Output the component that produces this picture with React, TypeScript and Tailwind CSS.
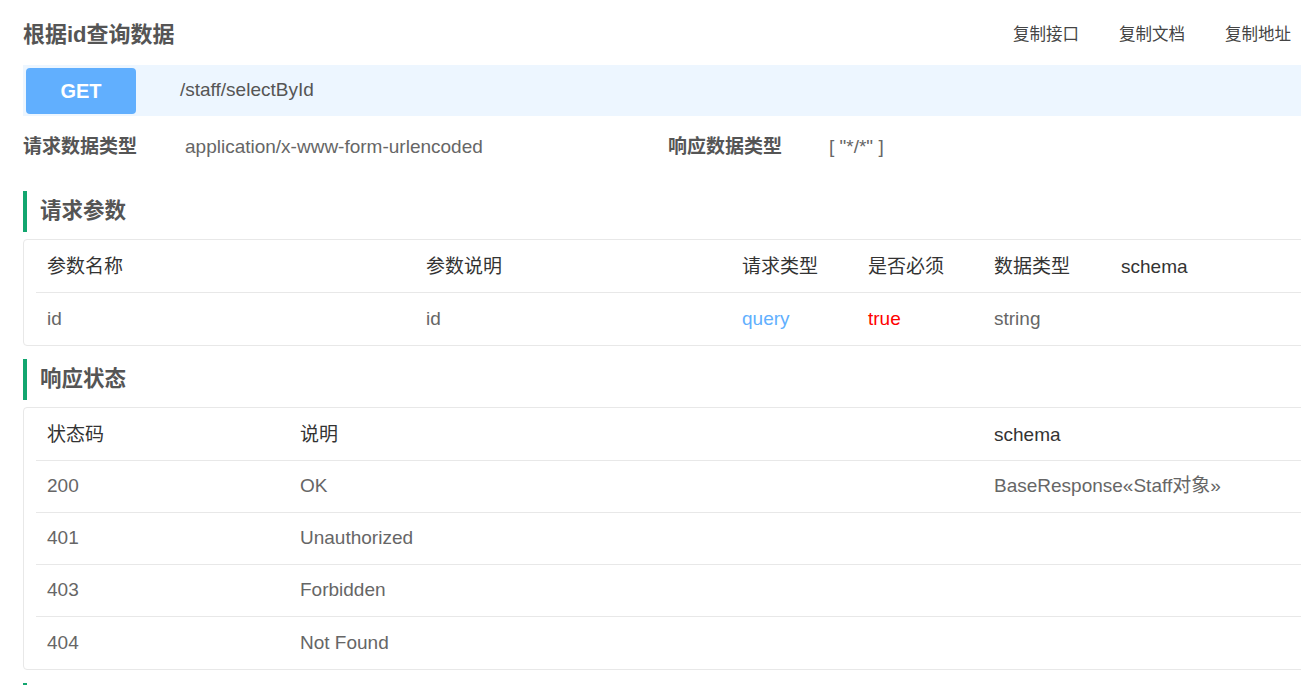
import React from 'react';

const font = { fontFamily: '"Liberation Sans", Arial, "Noto Sans CJK SC", sans-serif' };

type Cell = { text: string; className?: string };

interface DocTableProps {
  widths: string[];
  head: string[];
  rows: Cell[][];
}

const DocTable: React.FC<DocTableProps> = ({ widths, head, rows }) => (
  <div className="w-[1300px] rounded-[4px] border border-[#e8e8e8] px-[12px]">
    <div className="flex h-[53px] items-center border-b border-[#e8e8e8] pt-[2px] text-[#333]">
      {head.map((h, i) => (
        <div key={i} className={`${widths[i]} shrink-0 pl-[11px]`}>
          {h}
        </div>
      ))}
    </div>
    {rows.map((row, r) => (
      <div
        key={r}
        className={`flex h-[52px] items-center text-[#666] ${r < rows.length - 1 ? 'border-b border-[#e8e8e8]' : ''}`}
      >
        {row.map((c, i) => (
          <div key={i} className={`${widths[i]} shrink-0 pl-[11px] ${c.className ?? ''}`}>
            {c.text}
          </div>
        ))}
      </div>
    ))}
  </div>
);

const SectionTitle: React.FC<{ title: string }> = ({ title }) => (
  <div className="flex h-[41px] items-center border-l-[4px] border-[#12a66f] pl-[13px] text-[21.5px] font-bold text-[#555]">
    {title}
  </div>
);

export default function App() {
  return (
    <div className="h-[685px] w-[1301px] overflow-hidden bg-white pl-[23px] text-[19px]" style={font}>
      <div className="flex h-[65px] items-center justify-between pr-[10px] pt-[3px]">
        <h1 className="text-[22px] font-bold text-[#555]">根据id查询数据</h1>
        <div className="flex gap-[40px] text-[16.5px] text-[#444]">
          <span>复制接口</span>
          <span>复制文档</span>
          <span>复制地址</span>
        </div>
      </div>

      <div className="flex h-[51px] w-[1300px] items-center bg-[#edf6ff] pl-[3px]">
        <div className="flex h-[46px] w-[110px] items-center justify-center rounded-[4px] bg-[#61affe] text-[20px] font-bold text-white">
          GET
        </div>
        <span className="ml-[44px] text-[#555]">/staff/selectById</span>
      </div>

      <div className="flex h-[62px] items-center">
        <span className="w-[162px] font-bold text-[#555]">请求数据类型</span>
        <span className="w-[483px] text-[#666]">application/x-www-form-urlencoded</span>
        <span className="w-[161px] font-bold text-[#555]">响应数据类型</span>
        <span className="text-[#666]">[ "*/*" ]</span>
      </div>

      <div className="mt-[13px]">
        <SectionTitle title="请求参数" />
      </div>
      <div className="mt-[7px]">
        <DocTable
          widths={['w-[379px]', 'w-[316px]', 'w-[126px]', 'w-[126px]', 'w-[127px]', 'w-[180px]']}
          head={['参数名称', '参数说明', '请求类型', '是否必须', '数据类型', 'schema']}
          rows={[
            [
              { text: 'id' },
              { text: 'id' },
              { text: 'query', className: 'text-[#61affe]' },
              { text: 'true', className: 'text-[#ff0000]' },
              { text: 'string' },
              { text: '' },
            ],
          ]}
        />
      </div>

      <div className="mt-[13px]">
        <SectionTitle title="响应状态" />
      </div>
      <div className="mt-[7px]">
        <DocTable
          widths={['w-[253px]', 'w-[694px]', 'w-[300px]']}
          head={['状态码', '说明', 'schema']}
          rows={[
            [{ text: '200' }, { text: 'OK' }, { text: 'BaseResponse«Staff对象»' }],
            [{ text: '401' }, { text: 'Unauthorized' }, { text: '' }],
            [{ text: '403' }, { text: 'Forbidden' }, { text: '' }],
            [{ text: '404' }, { text: 'Not Found' }, { text: '' }],
          ]}
        />
      </div>

      <div className="mt-[13px] h-[41px] border-l-[4px] border-[#12a66f]" />
    </div>
  );
}
